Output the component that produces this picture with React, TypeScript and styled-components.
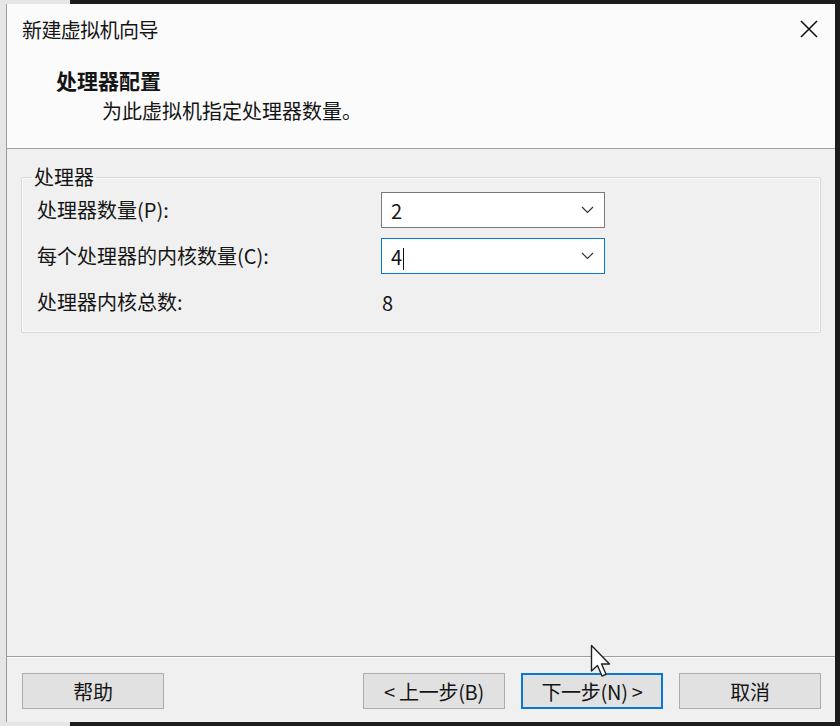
import styled, { createGlobalStyle } from "styled-components";

const GlobalStyle = createGlobalStyle`
  html, body {
    margin: 0;
    padding: 0;
    background: #1c1c1c;
  }
  body {
    font-family: "Noto Sans CJK SC", "Noto Sans", sans-serif;
    color: #151515;
  }
`;

const Desktop = styled.div`
  position: relative;
  width: 840px;
  height: 726px;
  overflow: hidden;
  background: #1c1c1c;
`;

const BackWindow = styled.div`
  position: absolute;
  left: 0;
  top: 0;
  width: 70px;
  height: 726px;
  background: #e6e6e6;
`;

const Dialog = styled.div`
  position: absolute;
  left: 6px;
  top: 4px;
  width: 829px;
  height: 718px;
  display: flex;
  flex-direction: column;
  background: #f0f0f0;
  border-left: 1px solid #9a9a9a;
  box-sizing: border-box;
`;

const TitleBar = styled.div`
  height: 50px;
  display: flex;
  align-items: center;
  justify-content: space-between;
  padding-left: 15px;
  background: #fbfbfb;
  font-size: 20px;
  letter-spacing: -0.6px;
`;

const CloseButton = styled.div`
  width: 50px;
  height: 50px;
  display: flex;
  align-items: center;
  justify-content: center;
  margin-right: 1px;
`;

const Header = styled.div`
  height: 94px;
  display: flex;
  flex-direction: column;
  background: #fbfbfb;
  border-bottom: 1px solid #a0a0a0;
`;

const HeaderTitle = styled.div`
  margin: 12px 0 0 49px;
  font-size: 21px;
  font-weight: 700;
  line-height: 28px;
`;

const HeaderSub = styled.div`
  margin: 3px 0 0 95px;
  font-size: 20px;
  line-height: 28px;
`;

const Body = styled.div`
  flex: 1;
  padding: 16px 14px 0 14px;
`;

const Group = styled.fieldset`
  margin: 0;
  padding: 0 15px 12px 15px;
  border: 1px solid #d9d9d9;
  border-radius: 2px;
  box-shadow: inset 0 0 0 1px #fafafa;
`;

const Legend = styled.legend`
  padding: 0 2px;
  margin-left: -5px;
  font-size: 20px;
  line-height: 24px;
`;

const Grid = styled.div`
  display: grid;
  grid-template-columns: 344px 224px;
  grid-auto-rows: 36px;
  row-gap: 10px;
  padding-top: 3px;
  align-items: center;
`;

const Label = styled.div`
  font-size: 20px;
  line-height: 24px;
`;

const Combo = styled.div<{ $focused?: boolean }>`
  height: 36px;
  box-sizing: border-box;
  border: 1px solid ${({ $focused }) => ($focused ? "#0a78d4" : "#7a7a7a")};
  background: #fff;
  display: flex;
  align-items: center;
  justify-content: space-between;
  padding: 0 10px 0 9px;
  font-size: 20px;
`;

const Caret = styled.span`
  display: inline-block;
  width: 1px;
  height: 22px;
  background: #111;
  margin-left: 1px;
  vertical-align: middle;
`;

const Value = styled.div`
  font-size: 20px;
  padding-left: 1px;
`;

const Footer = styled.div`
  height: 66px;
  border-top: 1px solid #a0a0a0;
  box-shadow: inset 0 1px 0 #fdfdfd;
  display: flex;
  align-items: flex-start;
  padding: 16px 14px 0 15px;
  gap: 16px;
  box-sizing: border-box;
`;

const Spacer = styled.div`
  flex: 1;
`;

const Button = styled.button<{ $primary?: boolean }>`
  width: 142px;
  height: 36px;
  box-sizing: border-box;
  font-family: inherit;
  font-size: 20px;
  color: #151515;
  background: #e1e1e1;
  border: ${({ $primary }) => ($primary ? "2px solid #0a78d4" : "1px solid #adadad")};
  padding: 0;
  letter-spacing: -0.3px;
`;

const Cursor = styled.svg`
  position: absolute;
  left: 590px;
  top: 644px;
`;

function Chevron() {
  return (
    <svg width="13" height="8" viewBox="0 0 13 8">
      <path d="M1 1 L6.5 6.5 L12 1" fill="none" stroke="#333" strokeWidth="1.2" />
    </svg>
  );
}

export default function App() {
  return (
    <>
      <GlobalStyle />
      <Desktop>
        <BackWindow />
        <Dialog>
          <TitleBar>
            <span>新建虚拟机向导</span>
            <CloseButton>
              <svg width="18" height="18" viewBox="0 0 18 18">
                <path d="M1 1 L17 17 M17 1 L1 17" stroke="#111" strokeWidth="1.6" />
              </svg>
            </CloseButton>
          </TitleBar>
          <Header>
            <HeaderTitle>处理器配置</HeaderTitle>
            <HeaderSub>为此虚拟机指定处理器数量。</HeaderSub>
          </Header>
          <Body>
            <Group>
              <Legend>处理器</Legend>
              <Grid>
                <Label>处理器数量(P):</Label>
                <Combo>
                  <span>2</span>
                  <Chevron />
                </Combo>
                <Label>每个处理器的内核数量(C):</Label>
                <Combo $focused>
                  <span>
                    4<Caret />
                  </span>
                  <Chevron />
                </Combo>
                <Label>处理器内核总数:</Label>
                <Value>8</Value>
              </Grid>
            </Group>
          </Body>
          <Footer>
            <Button>帮助</Button>
            <Spacer />
            <Button>&lt; 上一步(B)</Button>
            <Button $primary>下一步(N) &gt;</Button>
            <Button>取消</Button>
          </Footer>
        </Dialog>
        <Cursor width="22" height="36" viewBox="0 0 22 36">
          <path
            d="M1.5 1.5 L1.5 27 L7.5 21.5 L12 32 L16 30.3 L11.6 20 L19.5 20 Z"
            fill="#fff"
            stroke="#222"
            strokeWidth="1.4"
            strokeLinejoin="round"
          />
        </Cursor>
      </Desktop>
    </>
  );
}
